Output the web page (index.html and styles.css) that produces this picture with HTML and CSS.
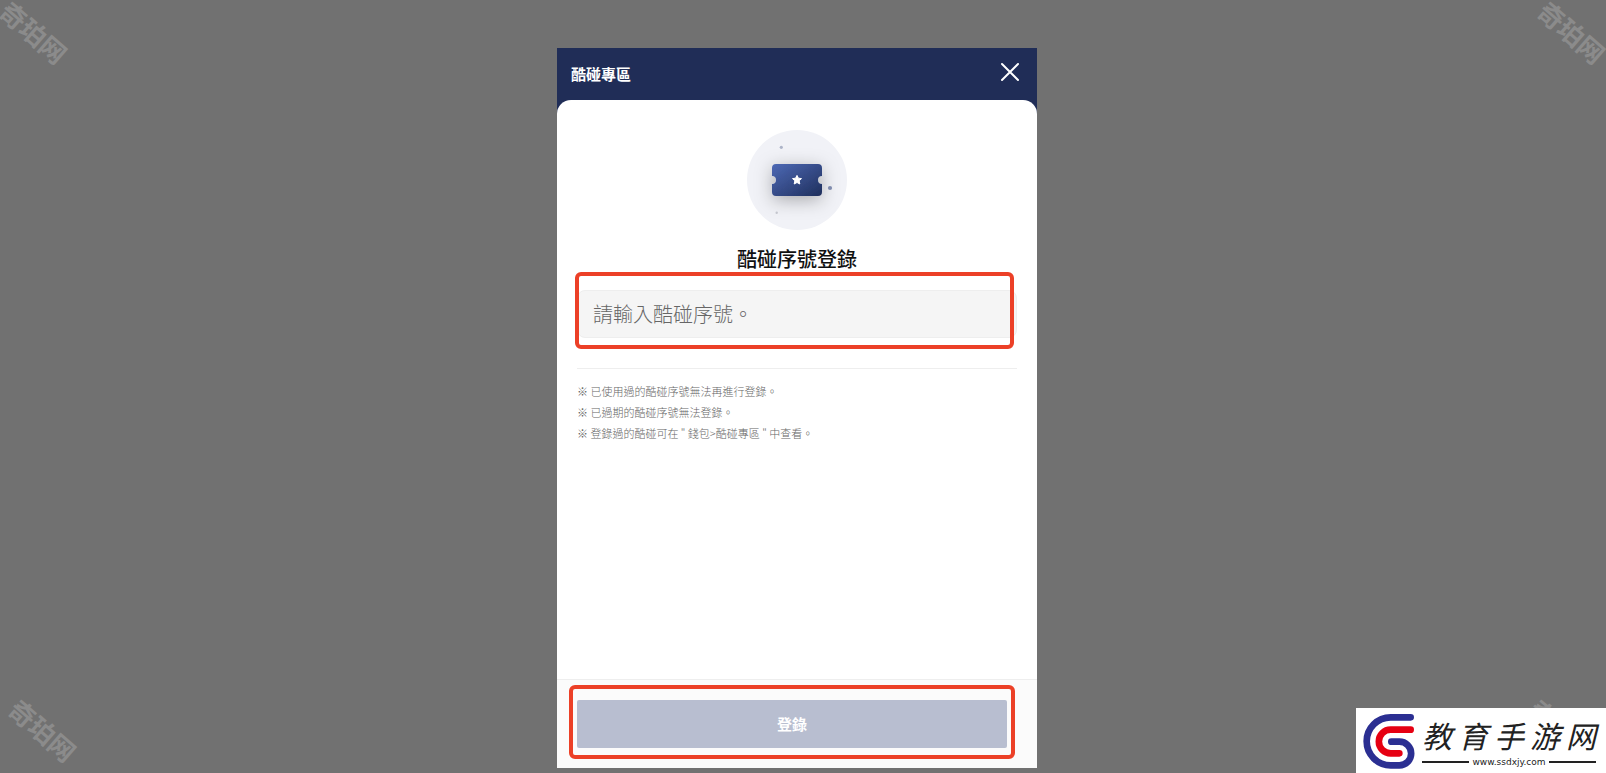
FILE: index.html
```html
<!DOCTYPE html>
<html lang="zh-Hant">
<head>
  <meta charset="UTF-8" />
  <meta name="viewport" content="width=device-width, initial-scale=1.0"/>
  <title>酷碰專區</title>
  <link rel="stylesheet" href="styles.css">
</head>
<body>
  <span class="watermark top-left" lang="zh-Hans">奇珀网</span>
  <span class="watermark top-right" lang="zh-Hans">奇珀网</span>
  <span class="watermark bottom-left" lang="zh-Hans">奇珀网</span>
  <span class="watermark bottom-right" lang="zh-Hans">奇珀网</span>

  <form class="modal">
    <header class="modal-header">
      <h1>酷碰專區</h1>
      <button type="button" class="close-btn" aria-label="關閉">
        <svg width="24" height="24" viewBox="0 0 24 24" fill="none" stroke="#fff" stroke-width="2" stroke-linecap="round">
          <path d="M4 4L20 20M20 4L4 20"/>
        </svg>
      </button>
    </header>

    <main class="modal-body">
      <svg class="coupon-icon" width="100" height="100" viewBox="0 0 100 100">
        <defs>
          <linearGradient id="ticket" x1="0" y1="0" x2="1" y2="1">
            <stop offset="0" stop-color="#4d69b5"/>
            <stop offset="1" stop-color="#1f2f5c"/>
          </linearGradient>
          <filter id="shadow" x="-60%" y="-90%" width="220%" height="300%">
            <feDropShadow dx="0" dy="4" stdDeviation="9" flood-color="#000" flood-opacity="0.3"/>
          </filter>
        </defs>
        <circle cx="50" cy="50" r="50" fill="#f1f2f7"/>
        <path filter="url(#shadow)" fill="url(#ticket)" d="M29 34H71A4 4 0 0 1 75 38V46A4 4 0 0 0 75 54V62A4 4 0 0 1 71 66H29A4 4 0 0 1 25 62V54A4 4 0 0 0 25 46V38A4 4 0 0 1 29 34Z"/>
        <path fill="#fff" stroke="#fff" stroke-linejoin="round" d="M50 45.4L51.4 48.2L54.5 48.6L52.2 50.8L52.8 54L50 52.5L47.2 54L47.8 50.8L45.5 48.6L48.6 48.2Z"/>
        <circle cx="34.3" cy="17.3" r="1.6" fill="#adb4c8"/>
        <circle cx="83" cy="58" r="2.1" fill="#7f8bad"/>
        <circle cx="29.7" cy="82.8" r="1.2" fill="#c4c6ce"/>
      </svg>

      <h2><label for="serial">酷碰序號登錄</label></h2>

      <div class="field">
        <input type="text" id="serial" class="serial-input" placeholder="請輸入酷碰序號。">
      </div>

      <ul class="notes">
        <li>※ 已使用過的酷碰序號無法再進行登錄。</li>
        <li>※ 已過期的酷碰序號無法登錄。</li>
        <li>※ 登錄過的酷碰可在 " 錢包&gt;酷碰專區 " 中查看。</li>
      </ul>
    </main>

    <footer class="modal-footer">
      <button type="submit" class="submit-btn">登錄</button>
    </footer>
  </form>

  <a class="site-badge" href="#" lang="zh-Hans">
    <svg width="58" height="60" viewBox="60 60 174 180" fill="none" stroke-width="20" stroke-linecap="round">
      <path stroke="#2b2f92" d="M212 79H152A72 72 0 0 0 152 223H178A35.500 35.500 0 0 0 178 152H154"/>
      <path stroke="#e60012" d="M212 116H152A35.500 35.500 0 0 0 152 187H178"/>
    </svg>
    <span class="badge-text">
      <span class="badge-name">
        <span>教</span><span>育</span><span>手</span><span>游</span><span>网</span>
      </span>
      <span class="badge-url">www.ssdxjy.com</span>
    </span>
  </a>
</body>
</html>
```

FILE: styles.css
```css
* {
  box-sizing: border-box;
}

body {
  font-family: "Noto Sans CJK TC", sans-serif;
  background: #717171;
  margin: 0;
  padding: 48px 12px 5px 0;
  min-height: 100vh;
  display: flex;
  flex-direction: column;
  align-items: center;
  position: relative;
  overflow: hidden;
}

h1, h2, ul {
  margin: 0;
  padding: 0;
}

.modal {
  width: 100%;
  max-width: 480px;
  flex: 1;
  display: flex;
  flex-direction: column;
  background: #202d57;
}

/* Header */
.modal-header {
  display: flex;
  align-items: center;
  justify-content: space-between;
  height: 52px;
  padding: 0 15px 2px 14px;
}

.modal-header h1 {
  color: white;
  font-size: 15px;
  font-weight: 700;
}

.close-btn {
  display: flex;
  background: none;
  border: none;
  padding: 0 0 2px;
  cursor: pointer;
}

/* Body */
.modal-body {
  flex: 1;
  display: flex;
  flex-direction: column;
  align-items: center;
  padding: 30px 20px 20px;
  background: white;
  border-radius: 14px 14px 0 0;
}

.modal-body h2 {
  margin-top: 14px;
  color: #111;
  font-size: 20px;
  line-height: 30px;
  font-weight: 500;
}

.field {
  position: relative;
  width: 100%;
  margin: 16px 0 30px;
}

.serial-input {
  display: block;
  width: 100%;
  height: 48px;
  padding: 0 15px 2px;
  background: #f5f5f5;
  border: 1px solid #eee;
  border-radius: 8px;
  font-family: inherit;
  font-size: 20px;
  font-weight: 300;
}

.serial-input::placeholder {
  color: #666;
}

/* Red frames around the field and the button */
.field::after,
.modal-footer::after {
  content: "";
  position: absolute;
  border: 4px solid #ec4027;
  border-radius: 6px;
  pointer-events: none;
}

.field::after {
  inset: -18px 3px -11px -2px;
}

.notes {
  width: 100%;
  padding-top: 12px;
  border-top: 1px solid #eee;
  list-style: none;
  color: #666;
  font-size: 11px;
  line-height: 21px;
  font-weight: 300;
}

/* Footer */
.modal-footer {
  position: relative;
  padding: 20px 30px 20px 20px;
  background: #fbfbfb;
  border-top: 1px solid #eee;
}

.modal-footer::after {
  inset: 5px 22px 9px 12px;
}

.submit-btn {
  display: block;
  width: 100%;
  height: 48px;
  padding: 0 0 2px;
  background: #b8bed0;
  border: none;
  border-radius: 2px;
  color: white;
  font-family: inherit;
  font-size: 15px;
  font-weight: 700;
  cursor: pointer;
}

/* Watermarks */
.watermark {
  position: absolute;
  color: #8b8b8b;
  font-family: "Noto Sans CJK SC", sans-serif;
  font-size: 26px;
  line-height: 28px;
  font-weight: bold;
  transform: rotate(41deg);
}

.top-left {
  top: 18px;
  left: -5px;
}

.top-right {
  top: 18px;
  right: -5px;
}

.bottom-left {
  bottom: 29px;
  left: 4px;
}

.bottom-right {
  bottom: 29px;
  right: 4px;
}

/* Site badge */
.site-badge {
  position: absolute;
  right: 0;
  bottom: 0;
  display: flex;
  align-items: center;
  gap: 4px;
  width: 250px;
  height: 65px;
  padding: 0 10px 0 4px;
  background: white;
  color: #222;
  text-decoration: none;
}

.badge-text {
  flex: 1;
  display: flex;
  flex-direction: column;
}

.badge-name {
  display: flex;
  justify-content: space-between;
  font-family: "Noto Sans CJK SC", sans-serif;
  font-size: 30px;
  line-height: 42px;
  font-weight: 400;
  font-style: italic;
}

.badge-url {
  display: flex;
  align-items: center;
  gap: 3px;
  font-family: "DejaVu Sans", sans-serif;
  font-size: 9px;
  line-height: 12px;
}

.badge-url::before,
.badge-url::after {
  content: "";
  flex: 1;
  height: 2px;
  background: #222;
}
```
